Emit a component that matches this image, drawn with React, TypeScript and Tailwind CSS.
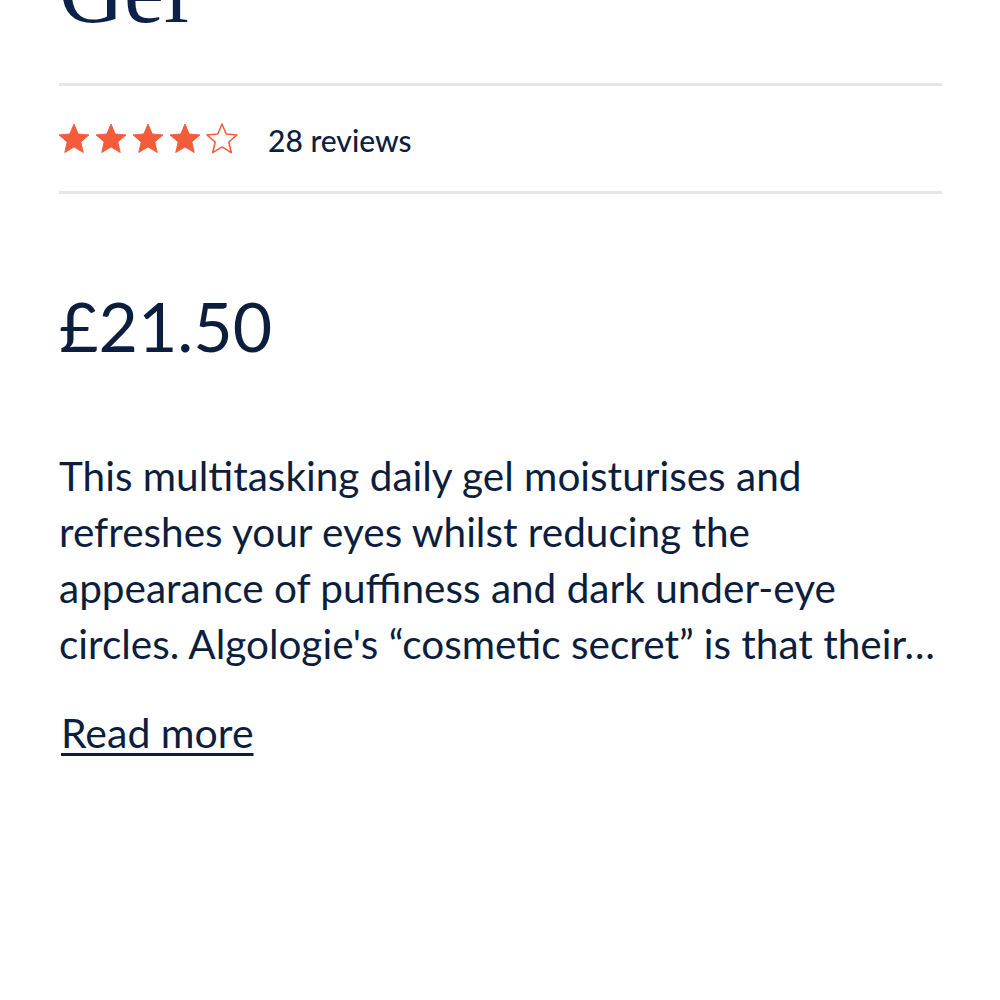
import React from 'react';

const Star = ({ filled }: { filled: boolean }) => (
  <svg viewBox="2 2 20 19.3" className="h-[29px] w-[30px] overflow-visible">
    <path
      d="M12 17.27L18.18 21l-1.64-7.03L22 9.24l-7.19-.61L12 2 9.19 8.63 2 9.24l5.46 4.73L5.82 21z"
      fill={filled ? '#f35b3a' : 'none'}
      stroke="#f35b3a"
      strokeWidth={filled ? 0.6 : 1}
      strokeLinejoin="round"
    />
  </svg>
);

export default function App() {
  const rating = 4;

  return (
    <div className="min-h-screen overflow-hidden bg-white pl-[59px] pr-[58px] text-[#0c1e3e]" style={{ fontFamily: 'Lato, sans-serif' }}>
      <h1
        className="mt-[-53px] text-[90px] leading-none text-[#0b2148]"
        style={{ fontFamily: '"Liberation Serif", serif' }}
      >
        Gel
      </h1>

      <div className="mt-[46px] border-t-[3px] border-[#e6e6e6]" />

      <div className="flex h-[105px] items-center">
        <div className="flex items-center gap-[7px]">
          {[0, 1, 2, 3, 4].map((i) => (
            <Star key={i} filled={i < rating} />
          ))}
        </div>
        <span className="ml-[31px] pt-[4px] text-[30px] font-medium">28 reviews</span>
      </div>

      <div className="border-t-[3px] border-[#e6e6e6]" />

      <div className="mt-[98px] text-[68px] leading-none">£21.50</div>

      <p className="mt-[88px] whitespace-nowrap text-[40.5px] leading-[56px]">
        This multitasking daily gel moisturises and
        <br />
        refreshes your eyes whilst reducing the
        <br />
        appearance of puffiness and dark under-eye
        <br />
        circles. Algologie's “cosmetic secret” is that their…
      </p>

      <a
        href="#"
        className="mt-[36px] ml-[2px] inline-block text-[41px] leading-[1.2] underline decoration-[3px] underline-offset-[5px]"
      >
        Read more
      </a>
    </div>
  );
}
